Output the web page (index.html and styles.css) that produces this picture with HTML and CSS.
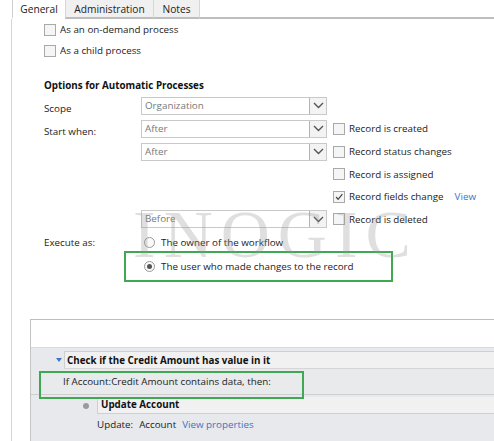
FILE: index.html
```html
<!DOCTYPE html>
<html>
<head>
<meta charset="utf-8">
<link rel="stylesheet" href="styles.css">
</head>
<body>
<div class="page">
  <div class="tabs">
    <div class="tab active">General</div>
    <div class="tab">Administration</div>
    <div class="tab">Notes</div>
    <div class="tab-fill"></div>
  </div>
  <div class="panel">
    <div class="content">
      <div class="chk-row"><span class="cb"></span><span>As an on-demand process</span></div>
      <div class="chk-row"><span class="cb"></span><span>As a child process</span></div>
      <div class="heading">Options for Automatic Processes</div>
      <div class="form">
        <div class="lbl low r1">Scope</div>
        <div class="sel r1"><span class="sel-text">Organization</span><span class="dd"><svg width="11" height="7" viewBox="0 0 11 7"><path d="M1 1 L5.5 5.5 L10 1" fill="none" stroke="#555" stroke-width="1.4"/></svg></span></div>

        <div class="lbl low r2">Start when:</div>
        <div class="sel r2"><span class="sel-text">After</span><span class="dd"><svg width="11" height="7" viewBox="0 0 11 7"><path d="M1 1 L5.5 5.5 L10 1" fill="none" stroke="#555" stroke-width="1.4"/></svg></span></div>
        <div class="opt r2"><span class="cb"></span><span>Record is created</span></div>

        <div class="sel r3"><span class="sel-text">After</span><span class="dd"><svg width="11" height="7" viewBox="0 0 11 7"><path d="M1 1 L5.5 5.5 L10 1" fill="none" stroke="#555" stroke-width="1.4"/></svg></span></div>
        <div class="opt r3"><span class="cb"></span><span>Record status changes</span></div>

        <div class="opt r4"><span class="cb"></span><span>Record is assigned</span></div>

        <div class="opt r5"><span class="cb checked"><svg width="12" height="12" viewBox="0 0 12 12"><path d="M2.5 6 L5 8.8 L10 2.5" fill="none" stroke="#444" stroke-width="1.5"/></svg></span><span>Record fields change</span><span class="link view">View</span></div>

        <div class="sel r6"><span class="sel-text">Before</span><span class="dd"><svg width="11" height="7" viewBox="0 0 11 7"><path d="M1 1 L5.5 5.5 L10 1" fill="none" stroke="#555" stroke-width="1.4"/></svg></span></div>
        <div class="opt r6"><span class="cb"></span><span>Record is deleted</span></div>

        <div class="lbl r7">Execute as:</div>
        <div class="radio-row r7"><span class="rb"></span><span>The owner of the workflow</span></div>

        <div class="hl-box r8"><div class="radio-row"><span class="rb on"></span><span>The user who made changes to the record</span></div></div>
      </div>

      <div class="flow">
        <div class="flow-top"></div>
        <div class="flow-body">
          <div class="step-row">
            <span class="tri"></span>
            <div class="step-title">Check if the Credit Amount has value in it</div>
          </div>
          <div class="cond-row">If Account:Credit Amount contains data, then:</div>
          <div class="action-row">
            <span class="dot"></span>
            <div class="action-title">Update Account</div>
          </div>
          <div class="action-detail"><span>Update:</span><span>Account</span><span class="link">View properties</span></div>
        </div>
        <div class="hl-box2"></div>
      </div>
    </div>
  </div>
  <div class="watermark">INOGIC</div>
</div>
</body>
</html>
```

FILE: styles.css
```css
html, body {
  margin: 0;
  padding: 0;
  background: #fff;
}
.page {
  position: relative;
  width: 494px;
  height: 441px;
  overflow: hidden;
  font-family: "Open Sans", "Noto Sans", sans-serif;
  font-size: 9.8px;
  color: #222;
}
.tabs {
  display: flex;
  padding-left: 12px;
  height: 19px;
  font-size: 10.2px;
}
.tab {
  box-sizing: border-box;
  height: 19px;
  text-align: center;
  background: #f0f0f0;
  border-left: 1px solid #d6d6d6;
  border-bottom: 2px solid #bdbdbd;
  line-height: 19px;
}
.tab:nth-child(1) { width: 53px; }
.tab:nth-child(2) { width: 88px; }
.tab:nth-child(3) { width: 47px; border-right: 1px solid #d6d6d6; }
.tab.active {
  background: #fff;
  border-bottom: 2px solid #fff;
  border-left: 1px solid #d0d0d0;
}
.tab-fill {
  flex: 1;
  border-bottom: 2px solid #bdbdbd;
}
.panel {
  margin-left: 11px;
  border-left: 1px solid #d4d4d4;
  height: 422px;
}
.content {
  padding-left: 32px;
}
.chk-row {
  display: flex;
  align-items: center;
  height: 21px;
  gap: 4px;
}
.cb {
  box-sizing: border-box;
  width: 12px;
  height: 12px;
  border: 1px solid #a9a9a9;
  background: #f5f5f5;
  display: inline-flex;
  align-items: center;
  justify-content: center;
  flex: none;
}
.cb.checked svg { display: block; }
.heading {
  margin-top: 17px;
  line-height: 16px;
  font-weight: 700;
  color: #111;
}
.form {
  display: grid;
  grid-template-columns: 97px 186px 6px 1fr;
  grid-template-rows: 23px 23px 23px 22px 23px 22px 25px 23px;
}
.lbl { grid-column: 1; align-self: center; }
.lbl.low { align-self: start; margin-top: 8px; }
.r1 { grid-row: 1; }
.r2 { grid-row: 2; }
.r3 { grid-row: 3; }
.r4 { grid-row: 4; }
.r5 { grid-row: 5; }
.r6 { grid-row: 6; }
.r7 { grid-row: 7; }
.r8 { grid-row: 8; }
.sel {
  grid-column: 2;
  align-self: center;
  box-sizing: border-box;
  height: 18px;
  display: flex;
  border: 1px solid #c9c9c9;
  background: #fff;
}
.sel-text {
  flex: 1;
  padding-left: 3px;
  line-height: 16px;
  color: #777;
}
.dd {
  box-sizing: border-box;
  width: 17px;
  height: 16px;
  border-left: 1px solid #b4b4b4;
  background: #f3f3f3;
  display: flex;
  align-items: center;
  justify-content: center;
}
.opt {
  grid-column: 4;
  align-self: center;
  display: flex;
  align-items: center;
  gap: 4px;
}
.link { color: #3b73c6; }
.view { margin-left: 7px; }
.radio-row {
  grid-column: 2 / -1;
  align-self: center;
  display: flex;
  align-items: center;
  gap: 6px;
  padding-left: 3px;
}
.rb {
  box-sizing: border-box;
  width: 11px;
  height: 11px;
  border-radius: 50%;
  border: 1px solid #9a9a9a;
  background: #fafafa;
  flex: none;
  display: flex;
  align-items: center;
  justify-content: center;
}
.rb.on::after {
  content: "";
  width: 5px;
  height: 5px;
  border-radius: 50%;
  background: #555;
}
.hl-box {
  grid-column: 2 / -1;
  align-self: center;
  box-sizing: border-box;
  margin-left: -17px;
  width: 269px;
  height: 31px;
  border: 2px solid #3ea852;
  display: flex;
  align-items: center;
  padding-left: 18px;
}
.hl-box .radio-row { padding-left: 0; }
.flow {
  position: relative;
  margin-top: 41px;
  margin-left: -14px;
  border-top: 1px solid #bdbdbd;
  border-left: 1px solid #c4c4c4;
  height: 130px;
}
.flow-top {
  height: 27px;
  background: #fff;
}
.flow-body {
  background: #e7e9ec;
  border-top: 1px solid #d8dadd;
  padding-top: 3px;
  height: 100px;
}
.step-row {
  display: flex;
  align-items: center;
  padding-left: 25px;
}
.tri {
  width: 0;
  height: 0;
  border-left: 3px solid transparent;
  border-right: 3px solid transparent;
  border-top: 4px solid #3b78c8;
  margin-right: 2px;
}
.step-title {
  flex: 1;
  box-sizing: border-box;
  height: 18px;
  line-height: 17px;
  padding-left: 2px;
  font-weight: 700;
  color: #111;
  background: #f1f1f1;
  border-top: 1px solid #cfcfcf;
  border-left: 1px solid #cfcfcf;
  border-bottom: 1px solid #d6d6d6;
}
.cond-row {
  box-sizing: border-box;
  height: 25px;
  line-height: 24px;
  padding-left: 32px;
  background: #e9eaec;
  border-bottom: 1px solid #cfcfcf;
  margin-top: 1px;
}
.action-row {
  display: flex;
  align-items: center;
  padding-left: 52px;
  margin-top: 2px;
}
.dot {
  width: 6px;
  height: 6px;
  border-radius: 50%;
  background: #9a9a9a;
  margin-right: 8px;
}
.action-title {
  flex: 1;
  box-sizing: border-box;
  height: 17px;
  line-height: 16px;
  padding-left: 3px;
  font-weight: 700;
  color: #111;
  background: #f1f1f1;
  border-left: 1px solid #d0d0d0;
  border-bottom: 1px solid #d0d0d0;
}
.action-detail {
  display: flex;
  gap: 6px;
  padding-left: 66px;
  margin-top: 3px;
  line-height: 16px;
}
.hl-box2 {
  position: absolute;
  left: 8px;
  top: 51px;
  width: 265px;
  height: 28px;
  box-sizing: border-box;
  border: 2px solid #3ea852;
}
.watermark {
  position: absolute;
  left: 133px;
  top: 211px;
  font-family: "Liberation Serif", serif;
  font-size: 68px;
  line-height: 46px;
  letter-spacing: 8px;
  color: rgba(150, 150, 150, 0.3);
  pointer-events: none;
}
```
